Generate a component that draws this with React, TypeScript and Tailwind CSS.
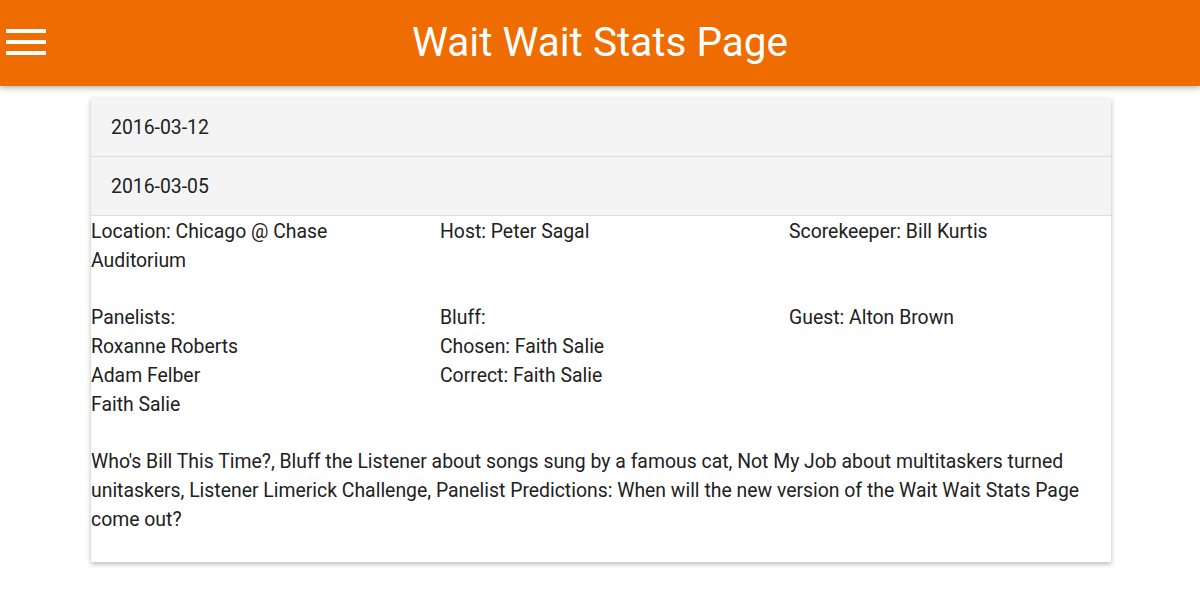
import React from "react";

export default function App() {
  return (
    <div className="min-h-[612px] bg-white text-[#212121]" style={{ fontFamily: "Roboto, 'Noto Sans', sans-serif" }}>
      <header className="h-[86px] bg-[#ef6c00] flex items-center relative shadow-[0_2px_6px_rgba(0,0,0,0.3)]">
        <div className="absolute left-[6px] top-[29px] flex flex-col gap-[7px]">
          <div className="w-[40px] h-[4px] bg-white" />
          <div className="w-[40px] h-[4px] bg-white" />
          <div className="w-[40px] h-[4px] bg-white" />
        </div>
        <h1 className="w-full text-center text-white text-[40.5px] leading-none pb-[1px]">Wait Wait Stats Page</h1>
      </header>
      <div className="pt-[12px] pl-[91px]">
        <div className="w-[1020px] bg-white shadow-[0_2px_5px_rgba(0,0,0,0.28)]">
          <div className="h-[59px] bg-[#f4f4f4] border-b border-[#dddddd] flex items-center pt-[2px] pl-[20px] text-[19.4px]">2016-03-12</div>
          <div className="h-[59px] bg-[#f4f4f4] border-b border-[#dddddd] flex items-center pt-[2px] pl-[20px] text-[19.4px]">2016-03-05</div>
          <div className="text-[19.4px] leading-[29px] pt-[1px] pb-[28px]">
            <div className="grid grid-cols-[349px_349px_322px]">
              <div className="pr-[40px]">Location: Chicago @ Chase Auditorium</div>
              <div>Host: Peter Sagal</div>
              <div>Scorekeeper: Bill Kurtis</div>
            </div>
            <div className="grid grid-cols-[349px_349px_322px] mt-[28px]">
              <div>
                <div>Panelists:</div>
                <div>Roxanne Roberts</div>
                <div>Adam Felber</div>
                <div>Faith Salie</div>
              </div>
              <div>
                <div>Bluff:</div>
                <div>Chosen: Faith Salie</div>
                <div>Correct: Faith Salie</div>
              </div>
              <div>Guest: Alton Brown</div>
            </div>
            <div className="mt-[28px] pr-[20px]">
              Who's Bill This Time?, Bluff the Listener about songs sung by a famous cat, Not My Job about multitaskers turned unitaskers, Listener Limerick Challenge, Panelist Predictions: When will the new version of the Wait Wait Stats Page come out?
            </div>
          </div>
        </div>
      </div>
    </div>
  );
}
